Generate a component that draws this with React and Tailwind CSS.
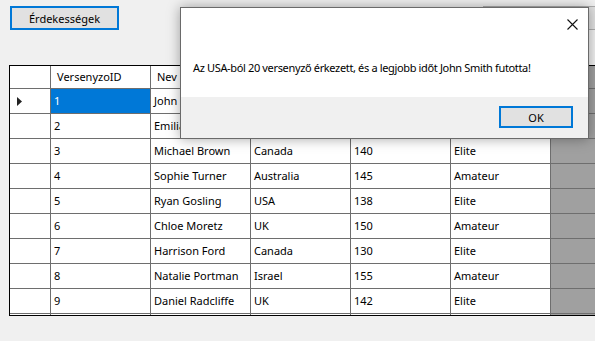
import React from 'react';

const rows = [
  ['1', 'John Smith', 'USA', '120', 'Elite'],
  ['2', 'Emilia Clarke', 'UK', '135', 'Amateur'],
  ['3', 'Michael Brown', 'Canada', '140', 'Elite'],
  ['4', 'Sophie Turner', 'Australia', '145', 'Amateur'],
  ['5', 'Ryan Gosling', 'USA', '138', 'Elite'],
  ['6', 'Chloe Moretz', 'UK', '150', 'Amateur'],
  ['7', 'Harrison Ford', 'Canada', '130', 'Elite'],
  ['8', 'Natalie Portman', 'Israel', '155', 'Amateur'],
  ['9', 'Daniel Radcliffe', 'UK', '142', 'Elite'],
  ['', '', '', '', ''],
];

const headers = ['VersenyzoID', 'Nev', 'Orszag', 'Ido', 'Kategoria'];

const App = () => {
  return (
    <div className="relative w-[595px] h-[341px] overflow-hidden bg-[#f0f0f0] text-[11px] text-black font-['Noto_Sans',sans-serif]">
      {/* top buttons */}
      <div className="flex justify-between pt-[6px] pl-[10px]">
        <button className="w-[109px] h-[24px] border-2 border-[#0078d7] bg-[#e1e1e1] text-[11px] leading-none">Érdekességek</button>
        <button className="w-[130px] h-[24px] -mr-[18px] border border-[#adadad] bg-[#e1e1e1]"></button>
      </div>

      {/* data grid */}
      <div className="ml-[9px] mt-[35px] w-[600px] border-y border-l border-black bg-[#a0a0a0]">
        <div className="h-[249px] overflow-hidden">
          <div className="flex h-[23px] border-b border-[#6e6e6e]">
            <div className="w-[41px] shrink-0 bg-white border-r border-[#6e6e6e]" />
            {headers.map(h => (
              <div key={h} className="w-[100px] shrink-0 bg-white border-r border-[#6e6e6e] pl-[6px] flex items-center">{h}</div>
            ))}
          </div>
          {rows.map((r, i) => (
            <div key={i} className="flex h-[25px] border-b border-[#6e6e6e]">
              <div className="w-[41px] shrink-0 bg-white border-r border-[#6e6e6e] flex items-center pl-[7px]">
                {i === 0 && (
                  <svg width="5" height="9" viewBox="0 0 5 9"><path d="M0 0 L5 4.5 L0 9 Z" fill="#222" /></svg>
                )}
              </div>
              {r.map((c, j) => (
                <div
                  key={j}
                  className={i === 0 && j === 0
                    ? 'w-[100px] shrink-0 border-r border-[#6e6e6e] pl-[3px] flex items-center bg-[#0078d7] text-white'
                    : 'w-[100px] shrink-0 border-r border-[#6e6e6e] pl-[3px] flex items-center bg-white'}
                >
                  {c}
                </div>
              ))}
            </div>
          ))}
        </div>
      </div>

      {/* message box */}
      <div className="absolute left-[180px] top-[7px] w-[409px] h-[132px] border border-[#6a6a6a] bg-white shadow-[0_0_12px_rgba(0,0,0,0.35)] flex flex-col">
        <div className="flex-1 relative">
          <svg className="absolute right-[10px] top-[11px]" width="11" height="11" viewBox="0 0 11 11">
            <path d="M0.5 0.5 L10.5 10.5 M10.5 0.5 L0.5 10.5" stroke="#111" strokeWidth="1.1" />
          </svg>
          <div className="pl-[12px] pt-[54px] leading-none whitespace-nowrap tracking-[-0.35px]">Az USA-ból 20 versenyző érkezett, és a legjobb időt John Smith futotta!</div>
        </div>
        <div className="h-[41px] bg-[#f0f0f0] flex justify-end items-start pt-[9px] pr-[15px]">
          <button className="w-[74px] h-[22px] border-2 border-[#0078d7] bg-[#e1e1e1] leading-none">OK</button>
        </div>
      </div>
    </div>
  );
};

export default App;
